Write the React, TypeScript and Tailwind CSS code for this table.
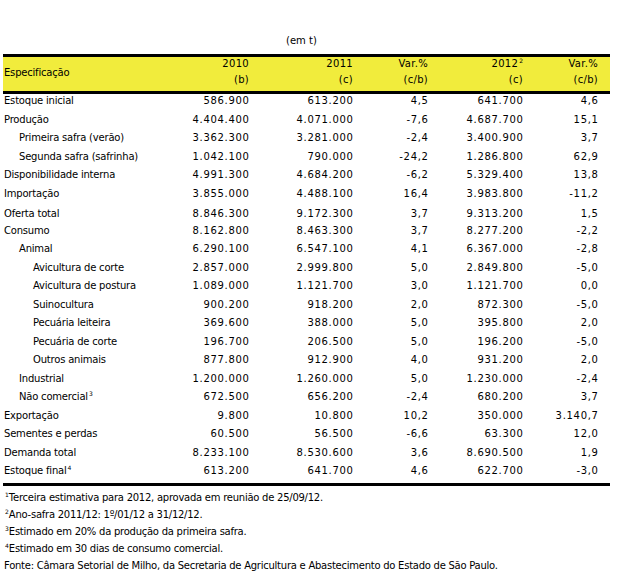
import React from 'react';

type Row = {
  label: string;
  sup?: string;
  indent?: 0 | 1 | 2;
  values: string[];
  shift?: boolean;
};

const rows: Row[] = [
  { label: 'Estoque inicial', values: ['586.900', '613.200', '4,5', '641.700', '4,6'] },
  { label: 'Produção', values: ['4.404.400', '4.071.000', '-7,6', '4.687.700', '15,1'] },
  { label: 'Primeira safra (verão)', indent: 1, values: ['3.362.300', '3.281.000', '-2,4', '3.400.900', '3,7'] },
  { label: 'Segunda safra (safrinha)', indent: 1, values: ['1.042.100', '790.000', '-24,2', '1.286.800', '62,9'] },
  { label: 'Disponibilidade interna', values: ['4.991.300', '4.684.200', '-6,2', '5.329.400', '13,8'] },
  { label: 'Importação', values: ['3.855.000', '4.488.100', '16,4', '3.983.800', '-11,2'] },
  { label: 'Oferta total', shift: true, values: ['8.846.300', '9.172.300', '3,7', '9.313.200', '1,5'] },
  { label: 'Consumo', values: ['8.162.800', '8.463.300', '3,7', '8.277.200', '-2,2'] },
  { label: 'Animal', indent: 1, values: ['6.290.100', '6.547.100', '4,1', '6.367.000', '-2,8'] },
  { label: 'Avicultura de corte', indent: 2, values: ['2.857.000', '2.999.800', '5,0', '2.849.800', '-5,0'] },
  { label: 'Avicultura de postura', indent: 2, values: ['1.089.000', '1.121.700', '3,0', '1.121.700', '0,0'] },
  { label: 'Suinocultura', indent: 2, values: ['900.200', '918.200', '2,0', '872.300', '-5,0'] },
  { label: 'Pecuária leiteira', indent: 2, values: ['369.600', '388.000', '5,0', '395.800', '2,0'] },
  { label: 'Pecuária de corte', indent: 2, values: ['196.700', '206.500', '5,0', '196.200', '-5,0'] },
  { label: 'Outros animais', indent: 2, values: ['877.800', '912.900', '4,0', '931.200', '2,0'] },
  { label: 'Industrial', indent: 1, values: ['1.200.000', '1.260.000', '5,0', '1.230.000', '-2,4'] },
  { label: 'Não comercial', sup: '3', indent: 1, values: ['672.500', '656.200', '-2,4', '680.200', '3,7'] },
  { label: 'Exportação', values: ['9.800', '10.800', '10,2', '350.000', '3.140,7'] },
  { label: 'Sementes e perdas', values: ['60.500', '56.500', '-6,6', '63.300', '12,0'] },
  { label: 'Demanda total', values: ['8.233.100', '8.530.600', '3,6', '8.690.500', '1,9'] },
  { label: 'Estoque final', sup: '4', values: ['613.200', '641.700', '4,6', '622.700', '-3,0'] },
];

const grid = 'grid grid-cols-[146px_100px_104px_75px_95px_75px_12px]';

function Sup({ n }: { n: string }) {
  return <span className="inline-block align-top text-[6px] leading-none -mt-[1px] ml-[1px] tracking-normal">{n}</span>;
}

export default function App() {
  return (
    <div
      className="w-[633px] h-[579px] bg-white text-black text-[10px] leading-none"
      style={{ fontFamily: '"DejaVu Sans", "Liberation Sans", sans-serif' }}
    >
      <div className="pt-[36px] pl-[286px] h-[54px]">(em t)</div>

      <div className="ml-[3px] w-[607px]">
        <div className={`${grid} h-[40px] bg-[#f1ec3c] border-t-[3px] border-b-[3px] border-black`}>
          <div className="flex items-center pl-[1px] pb-[2px] tracking-[-0.2px]">Especificação</div>
          {[
            ['2010', '(b)'],
            ['2011', '(c)'],
            ['Var.%', '(c/b)'],
            ['2012', '(c)'],
            ['Var.%', '(c/b)'],
          ].map(([a, b], i) => (
            <div key={i} className="flex flex-col items-end justify-between pt-[2px] pb-[6px] tracking-[0.3px]">
              <span>
                {a}
                {i === 3 && <Sup n="2" />}
              </span>
              <span>{b}</span>
            </div>
          ))}
          <div />
        </div>

        <div className="border-b-[3px] border-black">
          {rows.map((r) => (
            <div
              key={r.label}
              className={`${grid} h-[18.52px] items-start ${r.shift ? 'pt-[4px]' : 'pt-[2px]'}`}
            >
              <div
                className={`whitespace-nowrap tracking-[-0.2px] ${
                  r.indent === 2 ? 'pl-[30px]' : r.indent === 1 ? 'pl-[16px]' : 'pl-[1px]'
                }`}
              >
                {r.label}
                {r.sup && <Sup n={r.sup} />}
              </div>
              {r.values.map((v, i) => (
                <div key={i} className="text-right tracking-[0.7px] -mr-[0.7px]">
                  {v}
                </div>
              ))}
              <div />
            </div>
          ))}
        </div>
      </div>

      <div className="pl-[4px] pt-[7px] flex flex-col gap-[7px] tracking-[-0.25px]">
        <div>
          <Sup n="1" />
          Terceira estimativa para 2012, aprovada em reunião de 25/09/12.
        </div>
        <div>
          <Sup n="2" />
          Ano-safra 2011/12: 1º/01/12 a 31/12/12.
        </div>
        <div>
          <Sup n="3" />
          Estimado em 20% da produção da primeira safra.
        </div>
        <div>
          <Sup n="4" />
          Estimado em 30 dias de consumo comercial.
        </div>
        <div>Fonte: Câmara Setorial de Milho, da Secretaria de Agricultura e Abastecimento do Estado de São Paulo.</div>
      </div>
    </div>
  );
}
